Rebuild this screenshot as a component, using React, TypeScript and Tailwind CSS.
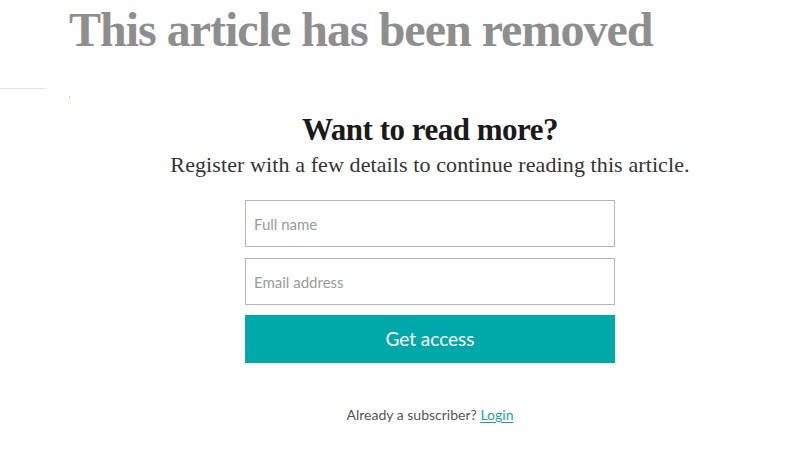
export default function App() {
  return (
    <div className="w-[800px] h-[449px] bg-white overflow-hidden relative">
      {/* faint rule at the far left under the headline */}
      <div className="absolute left-0 top-[88px] w-[47px] h-px bg-[#e4e4e4]" />
      <div className="absolute left-[69px] top-[96px] w-px h-[3px] bg-[#e6d9a8]" />

      <div className="ml-[69px] w-[722px] flex flex-col">
        <h1
          className="pt-[2px] text-[48px] leading-[56px] font-bold tracking-[-1px] text-[#8e8e8e] whitespace-nowrap"
          style={{ fontFamily: '"Liberation Serif", "Times New Roman", serif' }}
        >
          This article has been removed
        </h1>

        <div className="mt-[54px] flex flex-col items-center">
          <h2
            className="text-[31px] leading-[36px] font-bold tracking-[-0.5px] text-[#1a1a1a]"
            style={{ fontFamily: '"Liberation Serif", "Times New Roman", serif' }}
          >
            Want to read more?
          </h2>
          <p
            className="mt-[3px] text-[22px] leading-[28px] tracking-[0.1px] text-[#333333]"
            style={{ fontFamily: '"Liberation Serif", "Times New Roman", serif' }}
          >
            Register with a few details to continue reading this article.
          </p>

          <form
            className="mt-[21px] w-[370px] flex flex-col"
            style={{ fontFamily: 'Lato, "Open Sans", sans-serif' }}
          >
            <input
              type="text"
              placeholder="Full name"
              className="h-[47px] w-full border border-[#b5b5b5] px-[8px] text-[15px] text-[#333] placeholder:text-[#9a9a9a] outline-none"
            />
            <input
              type="email"
              placeholder="Email address"
              className="mt-[11px] h-[47px] w-full border border-[#b5b5b5] px-[8px] text-[15px] text-[#333] placeholder:text-[#9a9a9a] outline-none"
            />
            <button
              type="button"
              className="mt-[10px] h-[48px] w-full bg-[#00a9a9] text-white text-[19px]"
            >
              Get access
            </button>
          </form>

          <p
            className="mt-[43px] text-[14px] leading-[18px] text-[#555555]"
            style={{ fontFamily: 'Lato, "Open Sans", sans-serif' }}
          >
            Already a subscriber?{" "}
            <a href="#" className="text-[#1aa3a3] underline underline-offset-2">
              Login
            </a>
          </p>
        </div>
      </div>
    </div>
  );
}
